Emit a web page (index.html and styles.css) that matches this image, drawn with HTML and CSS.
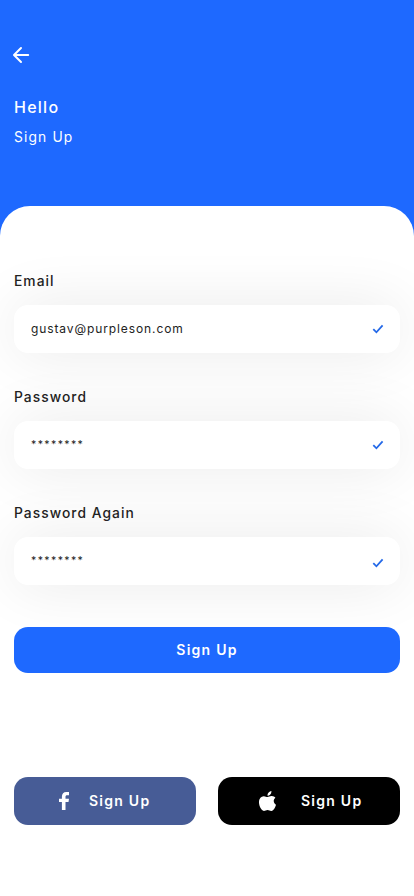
FILE: index.html
```html
<!DOCTYPE html>
<html lang="en">
<head>
<meta charset="utf-8">
<meta name="viewport" content="width=device-width, initial-scale=1">
<title>Sign Up</title>
<link rel="stylesheet" href="styles.css">
</head>
<body>
<header class="hero">
  <svg class="back" viewBox="0 0 18 18" width="18" height="18"><path d="M16.200 9H2.200M9 2L2 9l7 7" /></svg>
  <h1 class="hello">Hello</h1>
  <p class="subtitle">Sign Up</p>
</header>
<main class="sheet">
  <section class="group">
    <div class="label">Email</div>
    <div class="field"><span>gustav@purpleson.com</span><svg class="check" viewBox="0 0 12 10" width="12" height="10"><path d="M1.300 5.100l3.100 3.200 6.200-6.900" /></svg></div>
  </section>
  <section class="group">
    <div class="label">Password</div>
    <div class="field"><span class="stars">********</span><svg class="check" viewBox="0 0 12 10" width="12" height="10"><path d="M1.300 5.100l3.100 3.200 6.200-6.900" /></svg></div>
  </section>
  <section class="group last">
    <div class="label">Password Again</div>
    <div class="field"><span class="stars">********</span><svg class="check" viewBox="0 0 12 10" width="12" height="10"><path d="M1.300 5.100l3.100 3.200 6.200-6.900" /></svg></div>
  </section>
  <div class="button primary"><span>Sign Up</span></div>
  <div class="socials">
    <div class="button facebook">
      <svg viewBox="0 0 10 18" width="10" height="18"><path d="M2.900 18V9.900H0V6.700h2.900V4.600C2.900 1.700 4.600 0 7.200 0H10v3.200H8.200C6.900 3.200 6.500 3.800 6.500 4.800v1.900H10l-.5 3.200h-3V18z" /></svg>
      <span>Sign Up</span>
    </div>
    <div class="button apple">
      <svg viewBox="0 0 17 20" width="17" height="20"><path d="M12.400 0c.3 2.600-1.500 4.800-3.900 4.800C8.200 2.500 10.200.3 12.400 0zM16.400 6.700c-2.400 1.700-2.200 5.300.6 7-.7 2.300-2.300 6-4.600 6.200-1.400.1-2.200-.8-3.800-.8s-2.300.8-3.700.8C2.300 19.700.2 15.300 0 11.800-.2 8 1.900 5.300 4.700 5.200c1.500-.1 2.700.8 3.800.8s2.500-1 4.300-.9c1.500.1 2.800.6 3.600 1.600z" /></svg>
      <span>Sign Up</span>
    </div>
  </div>
</main>
</body>
</html>
```
FILE: styles.css
```css
* { box-sizing: border-box; }
body {
  margin: 0;
  height: 896px;
  overflow: hidden;
  background: #fff;
  color: #222;
  font-family: Inter, sans-serif;
}
.hero {
  height: 246px;
  padding: 46px 14px 0 12px;
  background: #1e69ff;
  color: #fff;
}
.back {
  display: block;
  fill: none;
  stroke: #fff;
  stroke-width: 2;
  stroke-linecap: round;
  stroke-linejoin: round;
}
.hello {
  margin: 33px 0 0 2px;
  font-size: 16px;
  line-height: 20px;
  font-weight: 500;
  letter-spacing: 1.25px;
}
.subtitle {
  margin: 10px 0 0 2px;
  font-size: 13.8px;
  line-height: 20px;
  letter-spacing: 1.15px;
}
.sheet {
  position: relative;
  height: 690px;
  margin-top: -40px;
  padding: 65px 14px 0;
  border-radius: 30px 30px 0 0;
  background: #fff;
}
.group { margin-bottom: 34px; }
.group.last { margin-bottom: 42px; }
.label {
  height: 34px;
  font-size: 13.8px;
  line-height: 20px;
  font-weight: 500;
  letter-spacing: 1.05px;
}
.field {
  display: flex;
  align-items: center;
  justify-content: space-between;
  height: 48px;
  padding: 0 16px 0 17px;
  border-radius: 14px;
  background: #fff;
  box-shadow: 0 0 60px rgba(0, 0, 0, 0.09);
  font-size: 12px;
  letter-spacing: 0.9px;
}
.field span { padding-bottom: 2px; }
.field .stars {
  font-size: 10.5px;
  letter-spacing: 1.4px;
}
.check {
  fill: none;
  stroke: #2469e8;
  stroke-width: 1.8;
}
.last .check { margin-top: 4px; }
.button {
  display: flex;
  align-items: center;
  border-radius: 14px;
  color: #fff;
  font-size: 14px;
  font-weight: 600;
  letter-spacing: 1.25px;
}
.button span { padding-bottom: 2px; }
.primary {
  height: 46px;
  justify-content: center;
  background: #1e69ff;
}
.socials {
  display: grid;
  grid-template-columns: 1fr 1fr;
  gap: 22px;
  margin-top: 104px;
}
.socials .button { height: 48px; }
.socials svg { fill: #fff; }
.facebook {
  padding-left: 45px;
  gap: 20px;
  background: #475c96;
}
.apple {
  padding-left: 41px;
  gap: 25px;
  background: #000;
}
```
